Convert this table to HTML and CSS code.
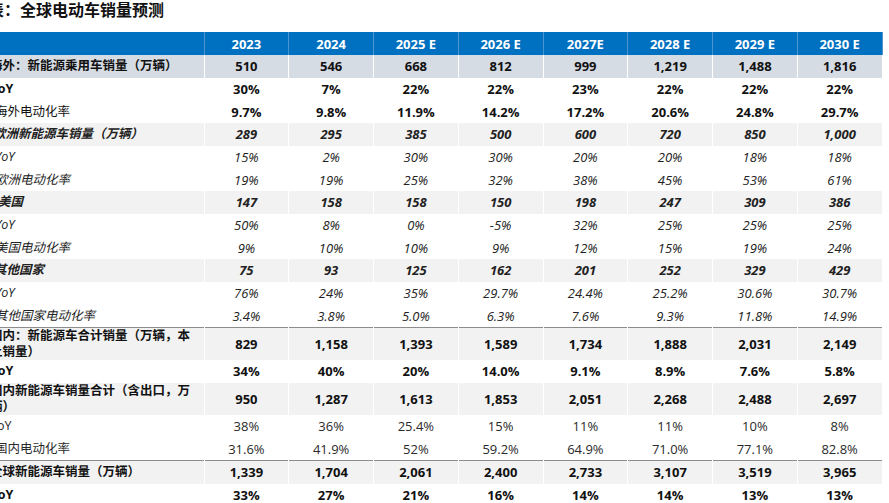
FILE: index.html
```html
<!DOCTYPE html>
<html lang="zh-CN">
<head>
<meta charset="utf-8">
<title>全球电动车销量预测</title>
<link rel="stylesheet" href="styles.css">
</head>
<body>
<div class="page">
  <h1 class="title">表：全球电动车销量预测</h1>
  <table class="grid">
    <colgroup>
      <col class="c-label">
      <col class="c-yr"><col class="c-yr"><col class="c-yr"><col class="c-yr">
      <col class="c-yr"><col class="c-yr"><col class="c-yr"><col class="c-yr">
    </colgroup>
    <thead>
      <tr class="head">
        <th></th><th>2023</th><th>2024</th><th>2025 E</th><th>2026 E</th><th>2027E</th><th>2028 E</th><th>2029 E</th><th>2030 E</th>
      </tr>
    </thead>
    <tbody>
      <tr class="tint bold">
        <td class="lbl">海外：新能源乘用车销量（万辆）</td><td>510</td><td>546</td><td>668</td><td>812</td><td>999</td><td>1,219</td><td>1,488</td><td>1,816</td>
      </tr>
      <tr class="bold">
        <td class="lbl">YoY</td><td>30%</td><td>7%</td><td>22%</td><td>22%</td><td>23%</td><td>22%</td><td>22%</td><td>22%</td>
      </tr>
      <tr class="bold">
        <td class="lbl plain in-5">海外电动化率</td><td>9.7%</td><td>9.8%</td><td>11.9%</td><td>14.2%</td><td>17.2%</td><td>20.6%</td><td>24.8%</td><td>29.7%</td>
      </tr>
      <tr class="shade bold ital">
        <td class="lbl in-3">欧洲新能源车销量（万辆）</td><td>289</td><td>295</td><td>385</td><td>500</td><td>600</td><td>720</td><td>850</td><td>1,000</td>
      </tr>
      <tr class="ital">
        <td class="lbl in-5">YoY</td><td>15%</td><td>2%</td><td>30%</td><td>30%</td><td>20%</td><td>20%</td><td>18%</td><td>18%</td>
      </tr>
      <tr class="ital">
        <td class="lbl in-5">欧洲电动化率</td><td>19%</td><td>19%</td><td>25%</td><td>32%</td><td>38%</td><td>45%</td><td>53%</td><td>61%</td>
      </tr>
      <tr class="shade bold ital">
        <td class="lbl in-8">美国</td><td>147</td><td>158</td><td>158</td><td>150</td><td>198</td><td>247</td><td>309</td><td>386</td>
      </tr>
      <tr class="ital">
        <td class="lbl in-5">YoY</td><td>50%</td><td>8%</td><td>0%</td><td>-5%</td><td>32%</td><td>25%</td><td>25%</td><td>25%</td>
      </tr>
      <tr class="ital">
        <td class="lbl in-5">美国电动化率</td><td>9%</td><td>10%</td><td>10%</td><td>9%</td><td>12%</td><td>15%</td><td>19%</td><td>24%</td>
      </tr>
      <tr class="shade bold ital">
        <td class="lbl in-4">其他国家</td><td>75</td><td>93</td><td>125</td><td>162</td><td>201</td><td>252</td><td>329</td><td>429</td>
      </tr>
      <tr class="ital">
        <td class="lbl in-5">YoY</td><td>76%</td><td>24%</td><td>35%</td><td>29.7%</td><td>24.4%</td><td>25.2%</td><td>30.6%</td><td>30.7%</td>
      </tr>
      <tr class="ital">
        <td class="lbl in-5">其他国家电动化率</td><td>3.4%</td><td>3.8%</td><td>5.0%</td><td>6.3%</td><td>7.6%</td><td>9.3%</td><td>11.8%</td><td>14.9%</td>
      </tr>
      <tr class="shade bold sep dbl">
        <td class="lbl">国内：新能源车合计销量（万辆，本土销量）</td><td>829</td><td>1,158</td><td>1,393</td><td>1,589</td><td>1,734</td><td>1,888</td><td>2,031</td><td>2,149</td>
      </tr>
      <tr class="bold">
        <td class="lbl">YoY</td><td>34%</td><td>40%</td><td>20%</td><td>14.0%</td><td>9.1%</td><td>8.9%</td><td>7.6%</td><td>5.8%</td>
      </tr>
      <tr class="shade bold dbl">
        <td class="lbl">国内新能源车销量合计（含出口，万辆）</td><td>950</td><td>1,287</td><td>1,613</td><td>1,853</td><td>2,051</td><td>2,268</td><td>2,488</td><td>2,697</td>
      </tr>
      <tr class="reg">
        <td class="lbl">YoY</td><td>38%</td><td>36%</td><td>25.4%</td><td>15%</td><td>11%</td><td>11%</td><td>10%</td><td>8%</td>
      </tr>
      <tr class="reg">
        <td class="lbl in-5">国内电动化率</td><td>31.6%</td><td>41.9%</td><td>52%</td><td>59.2%</td><td>64.9%</td><td>71.0%</td><td>77.1%</td><td>82.8%</td>
      </tr>
      <tr class="shade bold sep">
        <td class="lbl">全球新能源车销量（万辆）</td><td>1,339</td><td>1,704</td><td>2,061</td><td>2,400</td><td>2,733</td><td>3,107</td><td>3,519</td><td>3,965</td>
      </tr>
      <tr class="bold">
        <td class="lbl">YoY</td><td>33%</td><td>27%</td><td>21%</td><td>16%</td><td>14%</td><td>14%</td><td>13%</td><td>13%</td>
      </tr>
    </tbody>
  </table>
</div>
</body>
</html>
```

FILE: styles.css
```css
html, body {
  margin: 0;
  padding: 0;
  background: #ffffff;
}

body {
  font-family: "Open Sans", "Noto Sans CJK SC", sans-serif;
  color: #111111;
  overflow: hidden;
}

.page {
  margin-left: -14px;
}

.title {
  margin: 0 0 14px;
  padding-left: 2px;
  font-family: "Noto Sans CJK SC", sans-serif;
  font-size: 16px;
  line-height: 18px;
  font-weight: 700;
  color: #111111;
}

.grid {
  border-collapse: collapse;
  table-layout: fixed;
  width: 896px;
}

.c-label {
  width: 218px;
}

.c-yr {
  width: 84.75px;
}

.grid th,
.grid td {
  padding: 0;
  text-align: center;
  vertical-align: middle;
  font-size: 13px;
  line-height: 16px;
  white-space: nowrap;
  border-right: 1px solid #ffffff;
}

.grid td {
  height: 22.67px;
}

.head th {
  height: 23px;
  background: #0070c0;
  color: #ffffff;
  font-weight: 700;
  border-right: 1px solid #4a94cf;
}

.grid td.lbl {
  text-align: left;
  padding: 0 10px 0 4px;
  font-size: 12.5px;
  white-space: normal;
}

.grid td.in-3 {
  padding-left: 7px;
}

.grid td.in-4 {
  padding-left: 8px;
}

.grid td.in-5 {
  padding-left: 9px;
}

.grid td.in-8 {
  padding-left: 12px;
}

.tint td {
  background: #d6dce4;
}

.shade td {
  background: #f2f2f2;
}

.bold td {
  font-weight: 700;
}

.bold td.plain {
  font-weight: 400;
}

.ital td {
  font-style: italic;
  color: #222222;
}

.reg td {
  font-weight: 400;
  color: #2a2a2a;
}

.dbl td {
  height: 32px;
}

.sep td {
  border-top: 1px solid #8c8c8c;
}
```
